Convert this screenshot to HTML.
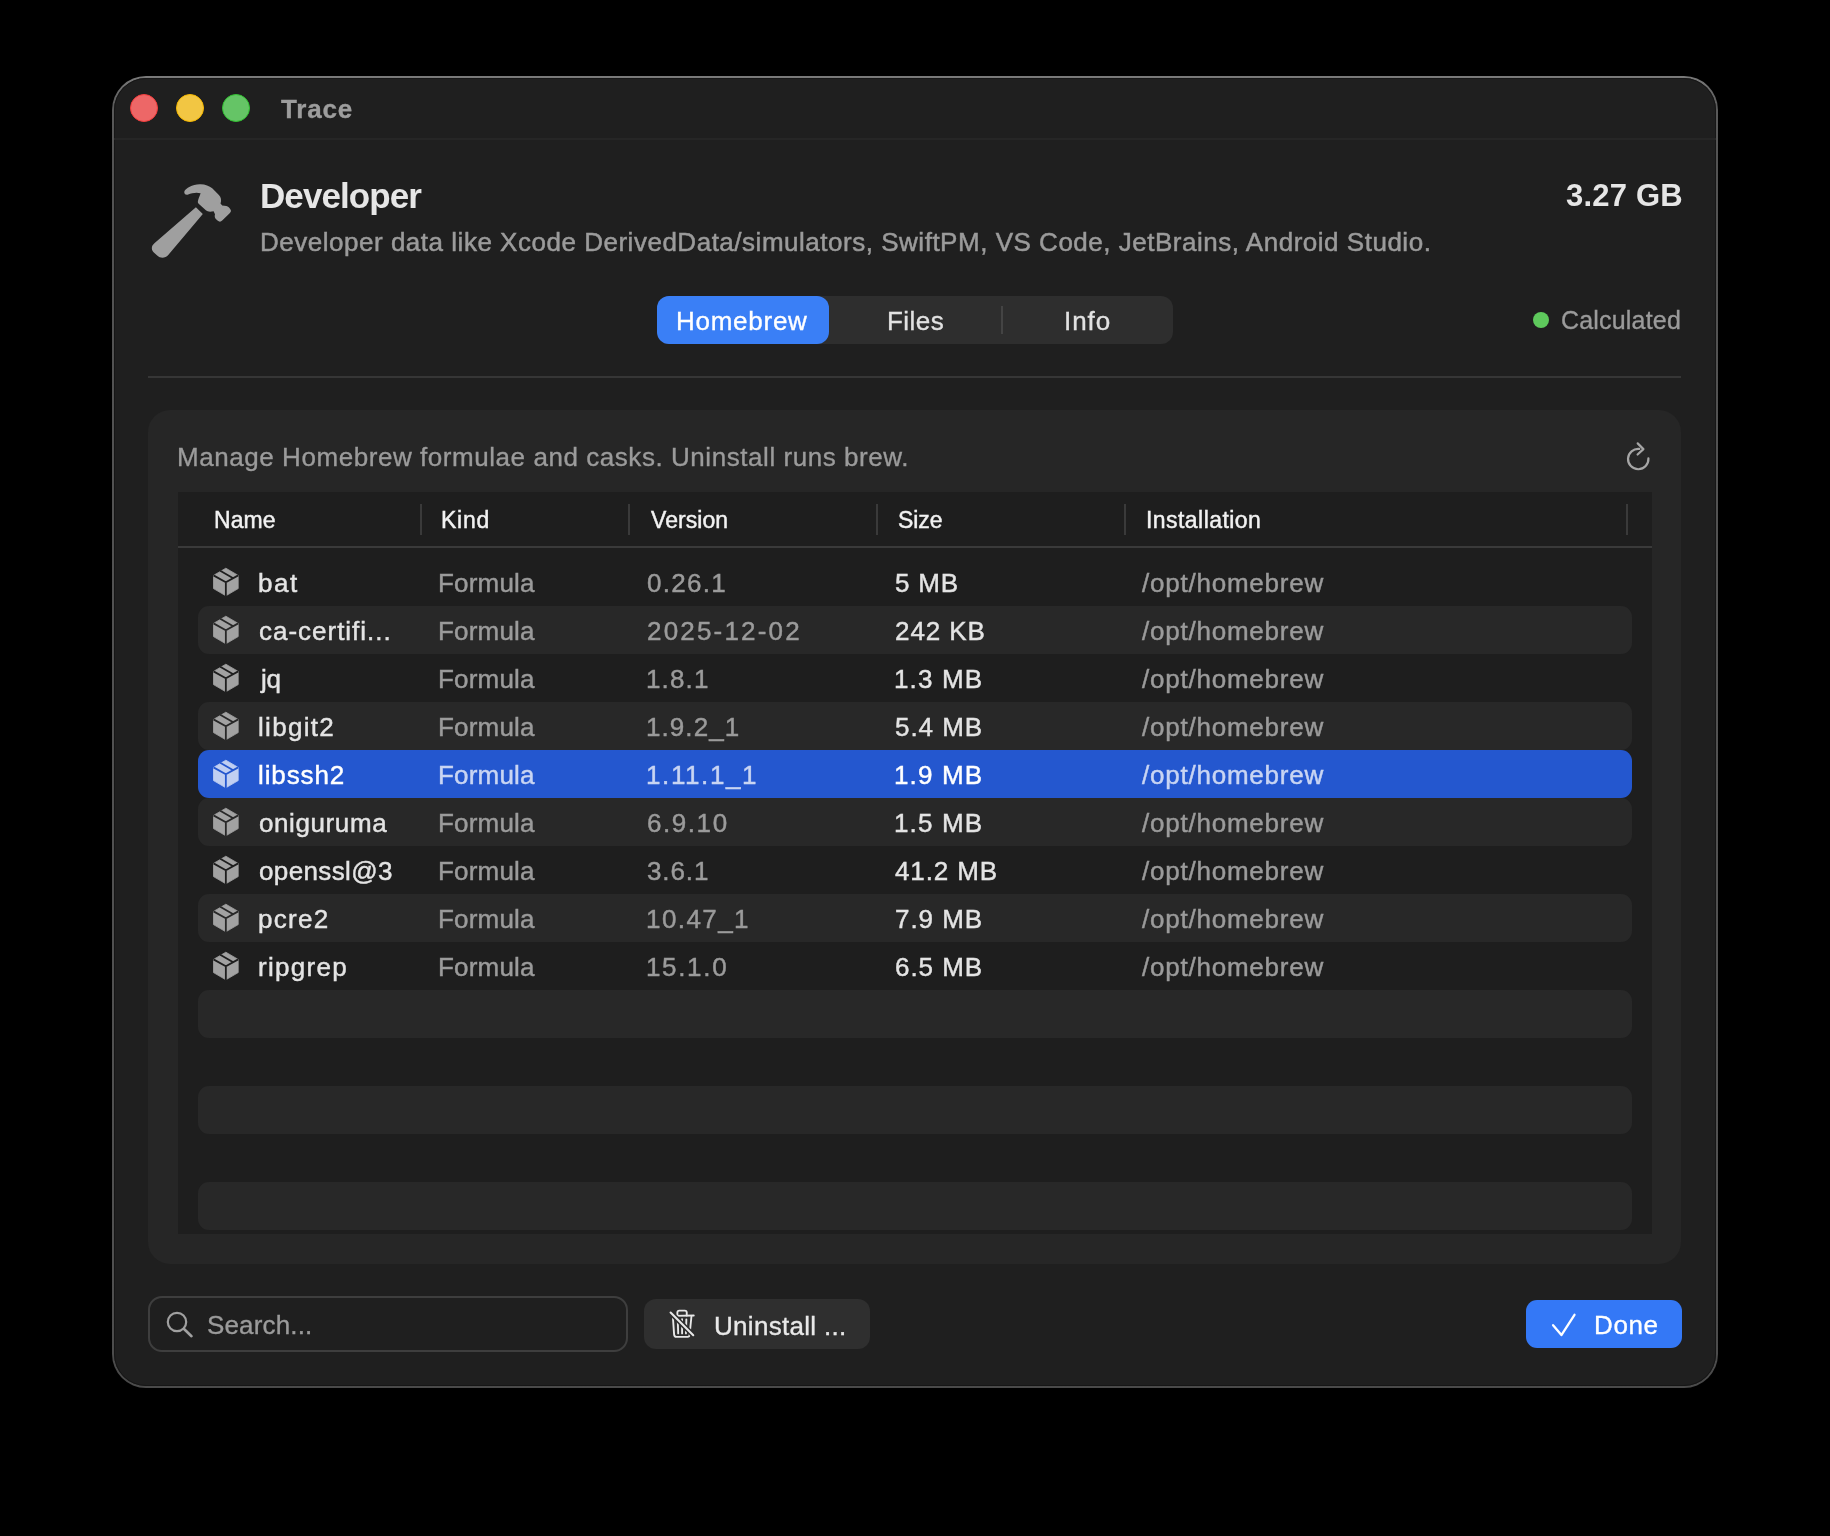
<!DOCTYPE html>
<html><head><meta charset="utf-8">
<style>
html,body{margin:0;padding:0;width:1830px;height:1536px;background:#000;overflow:hidden;}
*{box-sizing:border-box;}
body{font-family:"Liberation Sans",sans-serif;position:relative;}
.t,.cell,.hd{will-change:transform;-webkit-text-stroke:0.35px currentColor;}
.a{position:absolute;}
.t{position:absolute;white-space:nowrap;line-height:1;}
#win{position:absolute;left:112px;top:76px;width:1606px;height:1312px;border-radius:34px;background:linear-gradient(to bottom,#7a7a7a 0px,#5a5a5a 30px,#535353 80px,#505050 1200px,#4a4a4a 100%);}
#winbg{position:absolute;left:114px;top:78px;width:1602px;height:1308px;border-radius:32px;background:#1f1f1f;}
#inner{position:absolute;left:114px;top:78px;width:1602px;height:1308px;border-radius:32px;border:1px solid #161616;}
.tl{position:absolute;width:28px;height:28px;border-radius:50%;top:94px;}
.row{position:absolute;left:198px;width:1434px;height:48px;border-radius:11px;}
.stripe{background:#282828;}
.sel{background:#2457cf;}
.cell{position:absolute;white-space:nowrap;line-height:1;font-size:26px;letter-spacing:0.45px;top:12px;-webkit-text-stroke:0.45px currentColor !important;}
.name{left:61px;color:#e4e4e4;}
.kind{left:240px;color:#9b9b9b;}
.ver{left:449px;color:#9b9b9b;}
.size{left:697px;color:#e4e4e4;}
.inst{left:944px;color:#9b9b9b;}
.icon{position:absolute;left:12px;top:8px;}
.hd{position:absolute;top:509px;font-size:23px;color:#f2f2f2;line-height:1;white-space:nowrap;}
.csep{position:absolute;top:504px;width:2px;height:31px;background:#3a3a3a;}
</style></head>
<body>
<div id="win"></div>
<div id="winbg"></div>
<div id="inner"></div>
<!-- title bar -->
<div class="tl" style="left:130px;background:#ed6767;border:1px solid #f53c3c;"></div>
<div class="tl" style="left:176px;background:#f2c643;border:1px solid #f7b900;"></div>
<div class="tl" style="left:222px;background:#65c466;border:1px solid #31c131;"></div>
<div class="t" style="left:281px;top:96px;font-size:26px;font-weight:bold;color:#9d9d9d;letter-spacing:0.8px;">Trace</div>
<div class="a" style="left:114px;top:138px;width:1602px;height:2px;background:#262626;"></div>

<!-- header -->
<svg class="a" style="left:145px;top:178px;" width="95" height="85" viewBox="0 0 1717 1536">
 <path fill="#9f9f9f" d="M955 430 C955 400 985 330 1005 275 C940 255 850 265 780 300 C730 315 700 280 712 240 C740 180 850 120 990 112 C1080 108 1160 140 1215 185 L1335 305 C1375 345 1385 400 1365 460 L1395 495 L1470 505 C1500 510 1530 540 1550 580 C1560 605 1545 620 1530 635 L1395 770 C1370 795 1340 795 1310 770 L1285 745 C1260 720 1255 690 1265 655 L1240 600 C1180 615 1130 610 1100 585 L985 480 C960 460 955 445 955 430 Z"/>
 <path fill="#9f9f9f" d="M920 530 L1045 650 L420 1390 C370 1445 290 1465 220 1400 L160 1345 C110 1300 110 1230 170 1180 Z"/>
</svg>
<div class="t" style="left:260px;top:178px;font-size:35px;font-weight:bold;color:#e6e6e6;letter-spacing:-0.92px;-webkit-text-stroke:0;">Developer</div>
<div class="t" style="left:260px;top:229px;font-size:26px;color:#9b9b9b;letter-spacing:0.516px;-webkit-text-stroke:0.5px currentColor;">Developer data like Xcode DerivedData/simulators, SwiftPM, VS Code, JetBrains, Android Studio.</div>
<div class="t" style="left:1566px;top:180px;font-size:31px;font-weight:bold;color:#e6e6e6;letter-spacing:0.2px;-webkit-text-stroke:0;">3.27 GB</div>
<div class="a" style="left:1533px;top:312px;width:16px;height:16px;border-radius:50%;background:#5ec95c;"></div>
<div class="t" style="left:1561px;top:308px;font-size:25px;color:#9b9b9b;letter-spacing:0.19px;">Calculated</div>
<!-- segmented -->
<div class="a" style="left:657px;top:296px;width:516px;height:48px;border-radius:12px;background:#2e2e2e;"></div>
<div class="a" style="left:657px;top:296px;width:172px;height:48px;border-radius:12px;background:#3a7ff6;"></div>
<div class="a" style="left:1001px;top:306px;width:2px;height:28px;background:#444;"></div>
<div class="t" style="left:675.6px;top:308px;font-size:26px;color:#fff;letter-spacing:0.74px;">Homebrew</div>
<div class="t" style="left:887px;top:308px;font-size:26px;color:#e2e2e2;letter-spacing:0.45px;">Files</div>
<div class="t" style="left:1064px;top:308px;font-size:26px;color:#e2e2e2;letter-spacing:0.93px;">Info</div>
<div class="a" style="left:148px;top:376px;width:1533px;height:2px;background:#363636;"></div>
<!-- panel -->
<div class="a" style="left:148px;top:410px;width:1533px;height:854px;border-radius:22px;background:#262626;"></div>
<div class="t" style="left:176.5px;top:444px;font-size:26px;color:#9b9b9b;letter-spacing:0.556px;">Manage Homebrew formulae and casks. Uninstall runs brew.</div>
<svg class="a" style="left:1615px;top:435px;" width="45" height="45" viewBox="0 0 45 45">
 <path d="M33.4 23.4 A10.2 10.2 0 1 1 24.3 13.9" fill="none" stroke="#a6a6a6" stroke-width="2.2" stroke-linecap="round"/>
 <path d="M22.7 8.4 L28.4 14.1 L22.6 19.5" fill="none" stroke="#a6a6a6" stroke-width="2.2" stroke-linecap="round" stroke-linejoin="round"/>
</svg>
<!-- table -->
<div class="a" style="left:178px;top:492px;width:1474px;height:742px;background:#1e1e1e;"></div>
<div class="a" style="left:178px;top:546px;width:1474px;height:2px;background:#3a3a3a;"></div>
<div class="hd" style="left:214px;letter-spacing:0.07px;-webkit-text-stroke:0.45px currentColor;">Name</div>
<div class="hd" style="left:441.2px;letter-spacing:0.77px;-webkit-text-stroke:0.45px currentColor;">Kind</div>
<div class="hd" style="left:651.2px;letter-spacing:0.07px;-webkit-text-stroke:0.45px currentColor;">Version</div>
<div class="hd" style="left:898px;letter-spacing:-0.07px;-webkit-text-stroke:0.45px currentColor;">Size</div>
<div class="hd" style="left:1146px;letter-spacing:0.45px;-webkit-text-stroke:0.45px currentColor;">Installation</div>
<div class="csep" style="left:420px;"></div>
<div class="csep" style="left:628px;"></div>
<div class="csep" style="left:876px;"></div>
<div class="csep" style="left:1124px;"></div>
<div class="csep" style="left:1626px;"></div>
<!--ROWS-->
<div class="row" style="top:558px"><svg class="icon" width="32" height="32" viewBox="0 0 32 32"><path d="M15.85 2.2 L28.2 9.4 L28.2 22.6 L15.85 29.8 L3.5 22.6 L3.5 9.4 Z" fill="#a2a2a2" stroke="#a2a2a2" stroke-width="0.8" stroke-linejoin="round"/><path d="M3.5 9.4 L15.85 16.3 L28.2 9.4 M15.85 16.3 L15.85 30.8 M10.2 4.8 L22.8 12.0" fill="none" stroke="#1e1e1e" stroke-width="1.8"/></svg><div class="cell name" style="left:59.5px;letter-spacing:1.6px;color:#e4e4e4">bat</div><div class="cell kind" style="left:240.0px;letter-spacing:0.2px;color:#9b9b9b">Formula</div><div class="cell ver" style="left:449.4px;letter-spacing:1.28px;color:#9b9b9b">0.26.1</div><div class="cell size" style="left:696.6px;letter-spacing:0.833px;color:#e4e4e4">5 MB</div><div class="cell inst" style="left:944.0px;letter-spacing:0.77px;color:#9b9b9b">/opt/homebrew</div></div>
<div class="row stripe" style="top:606px"><svg class="icon" width="32" height="32" viewBox="0 0 32 32"><path d="M15.85 2.2 L28.2 9.4 L28.2 22.6 L15.85 29.8 L3.5 22.6 L3.5 9.4 Z" fill="#a2a2a2" stroke="#a2a2a2" stroke-width="0.8" stroke-linejoin="round"/><path d="M3.5 9.4 L15.85 16.3 L28.2 9.4 M15.85 16.3 L15.85 30.8 M10.2 4.8 L22.8 12.0" fill="none" stroke="#282828" stroke-width="1.8"/></svg><div class="cell name" style="left:60.5px;letter-spacing:0.983px;color:#e4e4e4">ca-certifi...</div><div class="cell kind" style="left:240.0px;letter-spacing:0.2px;color:#9b9b9b">Formula</div><div class="cell ver" style="left:449.4px;letter-spacing:2.178px;color:#9b9b9b">2025-12-02</div><div class="cell size" style="left:696.6px;letter-spacing:0.92px;color:#e4e4e4">242 KB</div><div class="cell inst" style="left:944.0px;letter-spacing:0.77px;color:#9b9b9b">/opt/homebrew</div></div>
<div class="row" style="top:654px"><svg class="icon" width="32" height="32" viewBox="0 0 32 32"><path d="M15.85 2.2 L28.2 9.4 L28.2 22.6 L15.85 29.8 L3.5 22.6 L3.5 9.4 Z" fill="#a2a2a2" stroke="#a2a2a2" stroke-width="0.8" stroke-linejoin="round"/><path d="M3.5 9.4 L15.85 16.3 L28.2 9.4 M15.85 16.3 L15.85 30.8 M10.2 4.8 L22.8 12.0" fill="none" stroke="#1e1e1e" stroke-width="1.8"/></svg><div class="cell name" style="left:62.5px;letter-spacing:-0.4px;color:#e4e4e4">jq</div><div class="cell kind" style="left:240.0px;letter-spacing:0.2px;color:#9b9b9b">Formula</div><div class="cell ver" style="left:448.4px;letter-spacing:1.15px;color:#9b9b9b">1.8.1</div><div class="cell size" style="left:695.6px;letter-spacing:1.16px;color:#e4e4e4">1.3 MB</div><div class="cell inst" style="left:944.0px;letter-spacing:0.77px;color:#9b9b9b">/opt/homebrew</div></div>
<div class="row stripe" style="top:702px"><svg class="icon" width="32" height="32" viewBox="0 0 32 32"><path d="M15.85 2.2 L28.2 9.4 L28.2 22.6 L15.85 29.8 L3.5 22.6 L3.5 9.4 Z" fill="#a2a2a2" stroke="#a2a2a2" stroke-width="0.8" stroke-linejoin="round"/><path d="M3.5 9.4 L15.85 16.3 L28.2 9.4 M15.85 16.3 L15.85 30.8 M10.2 4.8 L22.8 12.0" fill="none" stroke="#282828" stroke-width="1.8"/></svg><div class="cell name" style="left:59.5px;letter-spacing:1.3px;color:#e4e4e4">libgit2</div><div class="cell kind" style="left:240.0px;letter-spacing:0.2px;color:#9b9b9b">Formula</div><div class="cell ver" style="left:448.4px;letter-spacing:1.067px;color:#9b9b9b">1.9.2_1</div><div class="cell size" style="left:696.6px;letter-spacing:0.96px;color:#e4e4e4">5.4 MB</div><div class="cell inst" style="left:944.0px;letter-spacing:0.77px;color:#9b9b9b">/opt/homebrew</div></div>
<div class="row sel" style="top:750px"><svg class="icon" width="32" height="32" viewBox="0 0 32 32"><path d="M15.85 2.2 L28.2 9.4 L28.2 22.6 L15.85 29.8 L3.5 22.6 L3.5 9.4 Z" fill="#c0cff2" stroke="#c0cff2" stroke-width="0.8" stroke-linejoin="round"/><path d="M3.5 9.4 L15.85 16.3 L28.2 9.4 M15.85 16.3 L15.85 30.8 M10.2 4.8 L22.8 12.0" fill="none" stroke="#2457cf" stroke-width="1.8"/></svg><div class="cell name" style="left:59.5px;letter-spacing:0.9px;color:#ffffff">libssh2</div><div class="cell kind" style="left:240.0px;letter-spacing:0.2px;color:#c9d5f3">Formula</div><div class="cell ver" style="left:448.4px;letter-spacing:1.6px;color:#c9d5f3">1.11.1_1</div><div class="cell size" style="left:695.6px;letter-spacing:1.16px;color:#ffffff">1.9 MB</div><div class="cell inst" style="left:944.0px;letter-spacing:0.77px;color:#c9d5f3">/opt/homebrew</div></div>
<div class="row stripe" style="top:798px"><svg class="icon" width="32" height="32" viewBox="0 0 32 32"><path d="M15.85 2.2 L28.2 9.4 L28.2 22.6 L15.85 29.8 L3.5 22.6 L3.5 9.4 Z" fill="#a2a2a2" stroke="#a2a2a2" stroke-width="0.8" stroke-linejoin="round"/><path d="M3.5 9.4 L15.85 16.3 L28.2 9.4 M15.85 16.3 L15.85 30.8 M10.2 4.8 L22.8 12.0" fill="none" stroke="#282828" stroke-width="1.8"/></svg><div class="cell name" style="left:60.5px;letter-spacing:0.6px;color:#e4e4e4">oniguruma</div><div class="cell kind" style="left:240.0px;letter-spacing:0.2px;color:#9b9b9b">Formula</div><div class="cell ver" style="left:449.4px;letter-spacing:1.56px;color:#9b9b9b">6.9.10</div><div class="cell size" style="left:695.6px;letter-spacing:1.16px;color:#e4e4e4">1.5 MB</div><div class="cell inst" style="left:944.0px;letter-spacing:0.77px;color:#9b9b9b">/opt/homebrew</div></div>
<div class="row" style="top:846px"><svg class="icon" width="32" height="32" viewBox="0 0 32 32"><path d="M15.85 2.2 L28.2 9.4 L28.2 22.6 L15.85 29.8 L3.5 22.6 L3.5 9.4 Z" fill="#a2a2a2" stroke="#a2a2a2" stroke-width="0.8" stroke-linejoin="round"/><path d="M3.5 9.4 L15.85 16.3 L28.2 9.4 M15.85 16.3 L15.85 30.8 M10.2 4.8 L22.8 12.0" fill="none" stroke="#1e1e1e" stroke-width="1.8"/></svg><div class="cell name" style="left:60.5px;letter-spacing:0.375px;color:#e4e4e4">openssl@3</div><div class="cell kind" style="left:240.0px;letter-spacing:0.2px;color:#9b9b9b">Formula</div><div class="cell ver" style="left:449.4px;letter-spacing:0.9px;color:#9b9b9b">3.6.1</div><div class="cell size" style="left:696.6px;letter-spacing:0.867px;color:#e4e4e4">41.2 MB</div><div class="cell inst" style="left:944.0px;letter-spacing:0.77px;color:#9b9b9b">/opt/homebrew</div></div>
<div class="row stripe" style="top:894px"><svg class="icon" width="32" height="32" viewBox="0 0 32 32"><path d="M15.85 2.2 L28.2 9.4 L28.2 22.6 L15.85 29.8 L3.5 22.6 L3.5 9.4 Z" fill="#a2a2a2" stroke="#a2a2a2" stroke-width="0.8" stroke-linejoin="round"/><path d="M3.5 9.4 L15.85 16.3 L28.2 9.4 M15.85 16.3 L15.85 30.8 M10.2 4.8 L22.8 12.0" fill="none" stroke="#282828" stroke-width="1.8"/></svg><div class="cell name" style="left:59.5px;letter-spacing:1.3px;color:#e4e4e4">pcre2</div><div class="cell kind" style="left:240.0px;letter-spacing:0.2px;color:#9b9b9b">Formula</div><div class="cell ver" style="left:448.4px;letter-spacing:1.433px;color:#9b9b9b">10.47_1</div><div class="cell size" style="left:696.6px;letter-spacing:0.96px;color:#e4e4e4">7.9 MB</div><div class="cell inst" style="left:944.0px;letter-spacing:0.77px;color:#9b9b9b">/opt/homebrew</div></div>
<div class="row" style="top:942px"><svg class="icon" width="32" height="32" viewBox="0 0 32 32"><path d="M15.85 2.2 L28.2 9.4 L28.2 22.6 L15.85 29.8 L3.5 22.6 L3.5 9.4 Z" fill="#a2a2a2" stroke="#a2a2a2" stroke-width="0.8" stroke-linejoin="round"/><path d="M3.5 9.4 L15.85 16.3 L28.2 9.4 M15.85 16.3 L15.85 30.8 M10.2 4.8 L22.8 12.0" fill="none" stroke="#1e1e1e" stroke-width="1.8"/></svg><div class="cell name" style="left:59.5px;letter-spacing:1.283px;color:#e4e4e4">ripgrep</div><div class="cell kind" style="left:240.0px;letter-spacing:0.2px;color:#9b9b9b">Formula</div><div class="cell ver" style="left:448.4px;letter-spacing:1.66px;color:#9b9b9b">15.1.0</div><div class="cell size" style="left:696.6px;letter-spacing:0.96px;color:#e4e4e4">6.5 MB</div><div class="cell inst" style="left:944.0px;letter-spacing:0.77px;color:#9b9b9b">/opt/homebrew</div></div>
<div class="row stripe" style="top:990px"></div>
<div class="row stripe" style="top:1086px"></div>
<div class="row stripe" style="top:1182px"></div>
<!--/ROWS-->

<!-- bottom bar -->
<div class="a" style="left:148px;top:1296px;width:480px;height:56px;border-radius:14px;border:2px solid #3e3e3e;"></div>
<svg class="a" style="left:160px;top:1305px;" width="40" height="40" viewBox="0 0 40 40">
 <circle cx="17" cy="17" r="9.2" fill="none" stroke="#a0a0a0" stroke-width="2.2"/>
 <path d="M23.8 23.8 L31.5 31.2" stroke="#a0a0a0" stroke-width="2.6" stroke-linecap="round"/>
</svg>
<div class="t" style="left:206.8px;top:1312px;font-size:26px;color:#9b9b9b;letter-spacing:0.15px;">Search...</div>
<div class="a" style="left:644px;top:1299px;width:226px;height:50px;border-radius:12px;background:#2f2f2f;"></div>
<svg class="a" style="left:662px;top:1304px;" width="40" height="40" viewBox="0 0 1536 1536">
 <g fill="none" stroke="#e8e8e8" stroke-width="72" stroke-linecap="round" stroke-linejoin="round">
  <path d="M590 440 L590 330 Q590 255 665 255 L875 255 Q950 255 950 330 L950 440"/>
  <path d="M470 455 L1220 440"/>
  <path d="M420 530 L465 1175 Q472 1260 555 1260 L985 1260 Q1055 1260 1060 1180 L1130 480"/>
  <path d="M605 600 L622 1130 M770 580 L772 1130 M935 590 L920 1130"/>
 </g>
 <path d="M330 330 L1200 1200" stroke="#2f2f2f" stroke-width="200" stroke-linecap="butt"/>
 <path d="M330 330 L1200 1200" stroke="#e8e8e8" stroke-width="80" stroke-linecap="round"/>
</svg>
<div class="t" style="left:713.9px;top:1313px;font-size:26px;color:#e8e8e8;letter-spacing:0.3px;">Uninstall ...</div>
<div class="a" style="left:1526px;top:1300px;width:156px;height:48px;border-radius:11px;background:#3478f6;"></div>
<svg class="a" style="left:1540px;top:1305px;" width="40" height="40" viewBox="0 0 40 40">
 <path d="M13.1 20.2 L21.4 30.1 L34.5 9.8" fill="none" stroke="#fff" stroke-width="2.3" stroke-linecap="round" stroke-linejoin="round"/>
</svg>
<div class="t" style="left:1593.5px;top:1312px;font-size:26px;color:#fff;letter-spacing:0.6px;">Done</div>

</body></html>
